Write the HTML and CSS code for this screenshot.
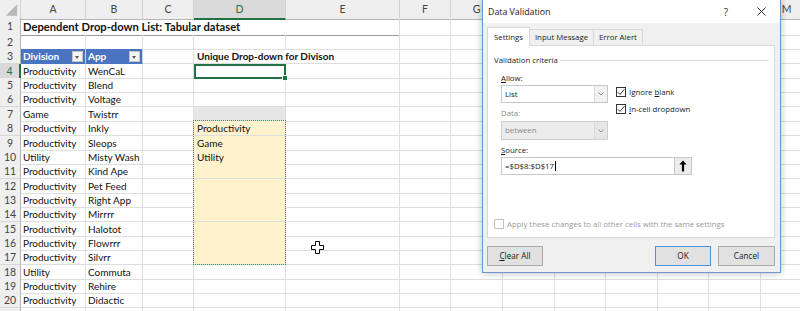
FILE: index.html
```html
<!DOCTYPE html>
<html>
<head>
<meta charset="utf-8">
<link rel="stylesheet" href="styles.css">
</head>
<body>
<div class="app">
  <div class="sheet">
    <div class="row hdr"><div class="corner"><svg width="21" height="18" viewBox="0 0 21 18"><polygon points="18,4 18,16 6,16" fill="#b9b9b9"/></svg></div><div>A</div><div>B</div><div>C</div><div class="sel">D</div><div>E</div><div>F</div><div>G</div><div>H</div><div>I</div><div>J</div><div>K</div><div>L</div><div>M</div></div>
    <div class="row r1"><span class="rh">1</span><span class="title">Dependent Drop-down List: Tabular dataset</span><span></span><span></span><span></span><span></span><span></span><span></span><span></span><span></span></div>
    <div class="row"><span class="rh">2</span><span></span><span></span><span></span><span></span><span></span><span></span><span></span><span></span><span></span><span></span><span></span><span></span><span></span></div>
    <div class="row"><span class="rh">3</span><span class="th">Division<b class="dd"></b></span><span class="th">App<b class="dd"></b></span><span></span><span class="heading">Unique Drop-down for Divison</span><span></span><span></span><span></span><span></span><span></span><span></span><span></span><span></span></div>
    <div class="row"><span class="rh sel">4</span><span>Productivity</span><span>WenCaL</span><span></span><span class="active-cell"></span><span></span><span></span><span></span><span></span><span></span><span></span><span></span><span></span><span></span></div>
    <div class="row"><span class="rh">5</span><span>Productivity</span><span>Blend</span><span></span><span></span><span></span><span></span><span></span><span></span><span></span><span></span><span></span><span></span><span></span></div>
    <div class="row"><span class="rh">6</span><span>Productivity</span><span>Voltage</span><span></span><span></span><span></span><span></span><span></span><span></span><span></span><span></span><span></span><span></span><span></span></div>
    <div class="row"><span class="rh">7</span><span>Game</span><span>Twistrr</span><span></span><span class="gray"></span><span></span><span></span><span></span><span></span><span></span><span></span><span></span><span></span><span></span></div>
    <div class="row"><span class="rh">8</span><span>Productivity</span><span>Inkly</span><span></span><span class="copy copy-top"><b class="marquee"></b>Productivity</span><span></span><span></span><span></span><span></span><span></span><span></span><span></span><span></span><span></span></div>
    <div class="row"><span class="rh">9</span><span>Productivity</span><span>Sleops</span><span></span><span class="copy">Game</span><span></span><span></span><span></span><span></span><span></span><span></span><span></span><span></span><span></span></div>
    <div class="row"><span class="rh">10</span><span>Utility</span><span>Misty Wash</span><span></span><span class="copy">Utility</span><span></span><span></span><span></span><span></span><span></span><span></span><span></span><span></span><span></span></div>
    <div class="row"><span class="rh">11</span><span>Productivity</span><span>Kind Ape</span><span></span><span class="copy"></span><span></span><span></span><span></span><span></span><span></span><span></span><span></span><span></span><span></span></div>
    <div class="row"><span class="rh">12</span><span>Productivity</span><span>Pet Feed</span><span></span><span class="copy"></span><span></span><span></span><span></span><span></span><span></span><span></span><span></span><span></span><span></span></div>
    <div class="row"><span class="rh">13</span><span>Productivity</span><span>Right App</span><span></span><span class="copy"></span><span></span><span></span><span></span><span></span><span></span><span></span><span></span><span></span><span></span></div>
    <div class="row"><span class="rh">14</span><span>Productivity</span><span>Mirrrr</span><span></span><span class="copy"></span><span></span><span></span><span></span><span></span><span></span><span></span><span></span><span></span><span></span></div>
    <div class="row"><span class="rh">15</span><span>Productivity</span><span>Halotot</span><span></span><span class="copy"></span><span></span><span></span><span></span><span></span><span></span><span></span><span></span><span></span><span></span></div>
    <div class="row"><span class="rh">16</span><span>Productivity</span><span>Flowrrr</span><span></span><span class="copy"></span><span></span><span></span><span></span><span></span><span></span><span></span><span></span><span></span><span></span></div>
    <div class="row"><span class="rh">17</span><span>Productivity</span><span>Silvrr</span><span></span><span class="copy"></span><span></span><span></span><span></span><span></span><span></span><span></span><span></span><span></span><span></span></div>
    <div class="row"><span class="rh">18</span><span>Utility</span><span>Commuta</span><span></span><span></span><span></span><span></span><span></span><span></span><span></span><span></span><span></span><span></span><span></span></div>
    <div class="row"><span class="rh">19</span><span>Productivity</span><span>Rehire</span><span></span><span></span><span></span><span></span><span></span><span></span><span></span><span></span><span></span><span></span><span></span></div>
    <div class="row"><span class="rh">20</span><span>Productivity</span><span>Didactic</span><span></span><span></span><span></span><span></span><span></span><span></span><span></span><span></span><span></span><span></span><span></span></div>
    <div class="row last"><span class="rh"></span><span></span><span></span><span></span><span></span><span></span><span></span><span></span><span></span><span></span><span></span><span></span><span></span><span></span></div>
  </div>

  <svg class="cursor" width="14" height="14" viewBox="0 0 14 14"><path d="M4.5 0.5h4v4h4v4h-4v4h-4v-4h-4v-4h4z" fill="#fff" stroke="#000" stroke-width="1"/></svg>

  <div class="dlg">
    <div class="dlg-title">
      <span class="dlg-name">Data Validation</span>
      <span class="dlg-help">?</span>
      <span class="dlg-close"><svg width="9" height="9" viewBox="0 0 9 9"><path d="M0.5 0.5L8.5 8.5M8.5 0.5L0.5 8.5" stroke="#333" stroke-width="1"/></svg></span>
    </div>
    <div class="dlg-body">
      <div class="tabs">
        <div class="tab active">Settings</div>
        <div class="tab">Input Message</div>
        <div class="tab">Error Alert</div>
      </div>
      <div class="panel">
        <div class="group-title"><span>Validation criteria</span></div>
        <div class="criteria">
          <div class="crit-left">
            <div class="lbl"><u>A</u>llow:</div>
            <div class="combo"><span class="combo-val">List</span><span class="combo-btn"><svg width="6" height="4" viewBox="0 0 6 4"><path d="M0.5 0.5L3 3L5.5 0.5" fill="none" stroke="#777" stroke-width="0.9"/></svg></span></div>
            <div class="lbl dis">Data:</div>
            <div class="combo dis"><span class="combo-val">between</span><span class="combo-btn"><svg width="6" height="4" viewBox="0 0 6 4"><path d="M0.5 0.5L3 3L5.5 0.5" fill="none" stroke="#888" stroke-width="0.9"/></svg></span></div>
          </div>
          <div class="crit-right">
            <div class="chk"><span class="box"><svg width="10" height="10" viewBox="0 0 10 10"><path d="M1.8 5.2L4 7.4L8.4 2.2" fill="none" stroke="#222" stroke-width="0.9"/></svg></span><span>Ignore <u>b</u>lank</span></div>
            <div class="chk"><span class="box"><svg width="10" height="10" viewBox="0 0 10 10"><path d="M1.8 5.2L4 7.4L8.4 2.2" fill="none" stroke="#222" stroke-width="0.9"/></svg></span><span><u>I</u>n-cell dropdown</span></div>
          </div>
        </div>
        <div class="lbl src-lbl"><u>S</u>ource:</div>
        <div class="source">
          <div class="src-input">=$D$8:$D$17<span class="caret"></span></div>
          <div class="src-btn"><svg width="8" height="12" viewBox="0 0 8 12"><path d="M4 0.5L7.6 4.6H5.1V11.5H2.9V4.6H0.4Z" fill="#000"/></svg></div>
        </div>
        <div class="apply"><span class="box dis"></span><span>Apply these changes to all other cells with the same settings</span></div>
      </div>
      <div class="footer">
        <div class="btn"><u>C</u>lear All</div>
        <div class="btn ok">OK</div>
        <div class="btn">Cancel</div>
      </div>
    </div>
  </div>
</div>
</body>
</html>
```
FILE: styles.css
```css
html, body {
  margin: 0;
  padding: 0;
  background: #fff;
}

.app {
  position: relative;
  width: 800px;
  height: 311px;
  overflow: hidden;
  font-family: "Lato", "Liberation Sans", sans-serif;
  color: #111;
}

.sheet {
  width: 813px;
}

.row {
  display: grid;
  grid-template-columns: 21px 65px 57px 51px 92px 114px 51px 52px 52px 51px 52px 51px 52px 52px;
  height: 14.37px;
}

.row > * {
  box-sizing: border-box;
  border-right: 1px solid #dedede;
  border-bottom: 1px solid #dedede;
  white-space: nowrap;
  padding-left: 2px;
  font-size: 10px;
  line-height: 14px;
  overflow: visible;
}

.row.r1 {
  height: 17px;
}

.row.r1 > * {
  line-height: 17px;
}

.hdr {
  height: 18px;
}

.hdr > div {
  background: #efefef;
  border-right: 1px solid #d2d2d2;
  border-bottom: 1px solid #b5b5b5;
  text-align: center;
  color: #444;
  font-size: 10.5px;
  line-height: 18px;
  padding: 0;
}

.hdr > div.sel {
  background: #dadada;
  color: #217346;
  border-bottom: 2px solid #217346;
}

.hdr > .corner {
  display: flex;
}

.rh {
  background: #efefef;
  color: #444;
  text-align: center;
  padding: 0 !important;
  border-right: 1px solid #b5b5b5 !important;
  border-bottom: 1px solid #d8d8d8 !important;
  font-size: 10.5px !important;
}

.rh.sel {
  background: #dadada;
  color: #217346;
  border-right: 2px solid #217346 !important;
}

.title {
  grid-column: span 5;
  font-weight: bold;
  font-size: 11.2px !important;
  border-bottom: 1px solid #9a9a9a !important;
}

.heading {
  grid-column: span 2;
  font-weight: bold;
  padding-left: 3px !important;
}

.th {
  position: relative;
  background: #4a74c2;
  color: #fff;
  font-weight: bold;
  border-right: 1px solid #c9d4ea !important;
  border-bottom: 1px solid #4a74c2 !important;
}

.dd {
  position: absolute;
  right: 2px;
  top: 2px;
  width: 9px;
  height: 9px;
  background: #f4f4f4;
  border: 1px solid #c4c4c4;
}

.dd::after {
  content: "";
  position: absolute;
  left: 2px;
  top: 4px;
  border-left: 2.5px solid transparent;
  border-right: 2.5px solid transparent;
  border-top: 3px solid #555;
}

.active-cell {
  position: relative;
  outline: 2px solid #217346;
  outline-offset: -2px;
}

.active-cell::after {
  content: "";
  position: absolute;
  right: -3px;
  bottom: -3px;
  width: 4px;
  height: 4px;
  background: #217346;
  border: 1px solid #fff;
}

.gray {
  background: #e6e6e6;
}

.copy {
  background: #fff2cc;
  padding-left: 3px !important;
}

.copy-top {
  position: relative;
}

.marquee {
  position: absolute;
  left: -1px;
  top: -1px;
  width: 93px;
  height: 144.7px;
  box-sizing: border-box;
  border: 1px dotted #3a8d5c;
  pointer-events: none;
}

.cursor {
  position: absolute;
  left: 311px;
  top: 241px;
}

/* ---------- dialog ---------- */

.dlg {
  position: absolute;
  left: 482px;
  top: -1px;
  width: 299px;
  height: 274px;
  box-sizing: border-box;
  border: 1px solid #6f97cf;
  background: #f0f0f0;
  box-shadow: 0 0 7px rgba(0, 0, 0, 0.28);
  display: flex;
  flex-direction: column;
  font-family: "Open Sans", "Noto Sans", sans-serif;
  font-size: 7.8px;
  color: #1a1a1a;
}

.dlg-title {
  height: 23px;
  background: #fff;
  display: flex;
  align-items: center;
  padding-left: 5px;
  flex: none;
}

.dlg-name {
  font-size: 8.8px;
  flex: 1;
}

.dlg-help {
  font-size: 10px;
  color: #333;
  width: 36px;
  text-align: center;
}

.dlg-close {
  width: 34px;
  display: flex;
  justify-content: center;
  margin-right: 2px;
}

.dlg-body {
  flex: 1;
  display: flex;
  flex-direction: column;
  padding: 4px 5px 5px 4px;
}

.tabs {
  display: flex;
  align-items: flex-end;
  height: 18px;
  position: relative;
  z-index: 1;
}

.tab {
  box-sizing: border-box;
  height: 16px;
  line-height: 15px;
  padding: 0 5px;
  border: 1px solid #d9d9d9;
  border-bottom: none;
  border-left: none;
  background: #f0f0f0;
  color: #222;
}

.tab.active {
  height: 19px;
  line-height: 18px;
  background: #fff;
  border-left: 1px solid #d9d9d9;
  margin-bottom: -1px;
  padding: 0 6px;
}

.panel {
  height: 193px;
  box-sizing: border-box;
  background: #fff;
  border: 1px solid #d9d9d9;
  display: flex;
  flex-direction: column;
  padding: 8px 6px 8px 6px;
}

.group-title {
  display: flex;
  align-items: center;
  height: 12px;
}

.group-title::after {
  content: "";
  flex: 1;
  height: 1px;
  background: #dcdcdc;
  margin-left: 2px;
  margin-right: -1px;
}

.criteria {
  display: flex;
  padding-left: 7px;
  margin-top: 6px;
}

.crit-left {
  width: 107px;
  display: flex;
  flex-direction: column;
}

.lbl {
  height: 12px;
  line-height: 12px;
}

.lbl.dis {
  color: #8a8a8a;
  margin-top: 4px;
}

.combo {
  margin-top: 1px;
  height: 18px;
  box-sizing: border-box;
  border: 1px solid #c8c8c8;
  background: #fff;
  display: flex;
}

.combo.dis {
  margin-top: 2px;
  height: 19px;
  background: #ececec;
  color: #8a8a8a;
  border-color: #cfcfcf;
}

.combo-val {
  flex: 1;
  padding-left: 3px;
  line-height: 16px;
}

.combo-btn {
  width: 12px;
  border-left: 1px solid #dadada;
  background: #f2f2f2;
  display: flex;
  align-items: center;
  justify-content: center;
}

.combo.dis .combo-btn {
  background: #e6e6e6;
}

.crit-right {
  margin-left: 8px;
  padding-top: 15px;
  display: flex;
  flex-direction: column;
  gap: 7px;
}

.chk {
  display: flex;
  align-items: center;
  height: 10px;
}

.box {
  width: 10px;
  height: 10px;
  box-sizing: border-box;
  border: 1px solid #333;
  background: #fff;
  margin-right: 3px;
  display: flex;
  flex: none;
}

.box svg {
  margin: -1px;
}

.box.dis {
  border-color: #c4c4c4;
}

.src-lbl {
  margin-top: 4px;
  padding-left: 7px;
}

.source {
  display: flex;
  margin-top: 1px;
  padding-left: 7px;
}

.src-input {
  width: 174px;
  height: 18px;
  box-sizing: border-box;
  border: 1px solid #c8c8c8;
  padding-left: 3px;
  line-height: 16px;
  display: flex;
  align-items: center;
}

.caret {
  width: 1px;
  height: 10px;
  background: #000;
  margin-left: 0.5px;
}

.src-btn {
  width: 17px;
  height: 18px;
  box-sizing: border-box;
  border: 1px solid #c8c8c8;
  border-left: none;
  background: #ececec;
  display: flex;
  align-items: center;
  justify-content: center;
}

.apply {
  margin-top: auto;
  display: flex;
  align-items: center;
  color: #9a9a9a;
  height: 11px;
}

.footer {
  display: flex;
  margin-top: 8px;
  gap: 7px;
}

.btn {
  width: 56px;
  height: 20px;
  box-sizing: border-box;
  border: 1px solid #adadad;
  background: #e1e1e1;
  text-align: center;
  line-height: 18px;
  font-size: 8.2px;
}

.btn:first-child {
  margin-right: auto;
}

.btn.ok {
  border-color: #4c8fd6;
}

.btn:last-child {
  width: 57px;
}
```
